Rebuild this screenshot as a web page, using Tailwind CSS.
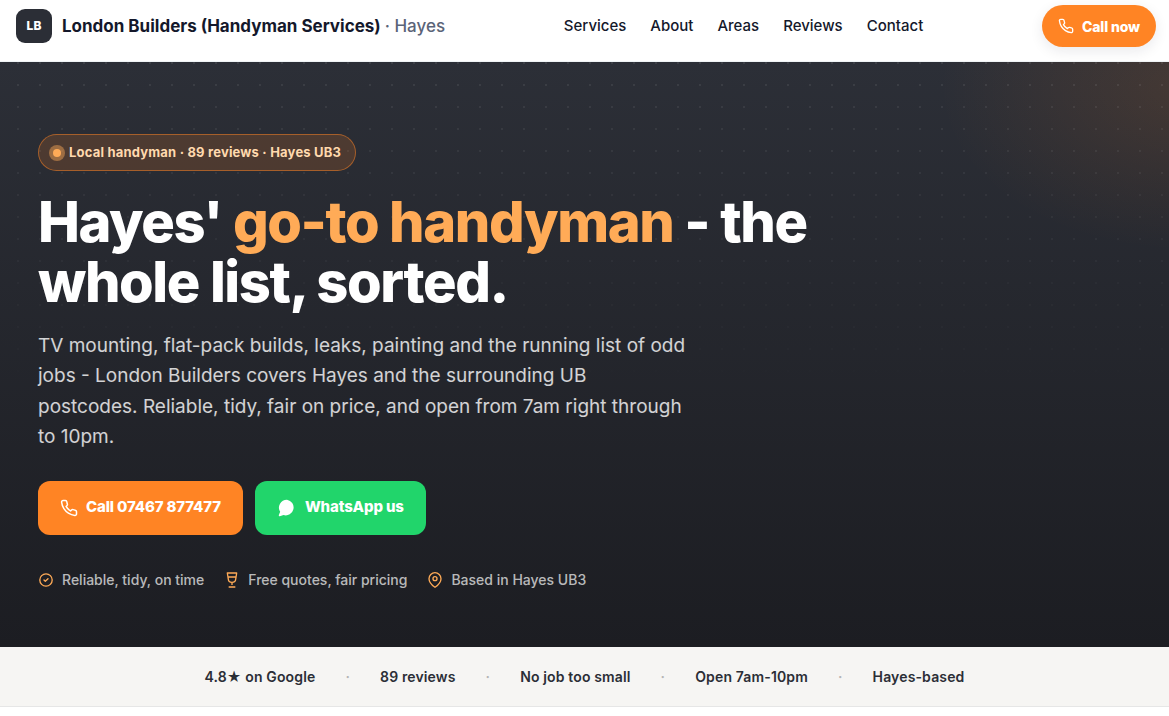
<!DOCTYPE html>
<html lang="en-GB">
<head>
    <meta charset="UTF-8">
    <meta name="viewport" content="width=device-width, initial-scale=1.0">
    <title>London Builders (Handyman Services) · Hayes</title>
    <script src="https://cdn.jsdelivr.net/npm/@tailwindcss/browser@4"></script>
</head>
<body class="bg-white font-[Inter,sans-serif] text-[#14182b] antialiased">

    <header class="flex items-center justify-between border-b border-[#f0f4f6] bg-white pt-[5px] pr-[13px] pb-[14px] pl-4">
        <a href="#" class="flex items-center gap-[10px] text-[17px] leading-7 font-bold">
            <span class="flex h-[34px] w-9 items-center justify-center rounded-[9px] bg-[#2b2e36] text-[12px] font-extrabold text-white">LB</span>
            <span>London Builders (Handyman Services) <span class="font-medium text-[#5b6478]">· Hayes</span></span>
        </a>
        <nav class="flex gap-6 text-[15px] font-medium">
            <a href="#services">Services</a>
            <a href="#about">About</a>
            <a href="#areas">Areas</a>
            <a href="#reviews">Reviews</a>
            <a href="#contact">Contact</a>
        </nav>
        <a href="tel:07467877477" class="flex h-[42px] items-center gap-2 rounded-full bg-[#ff8424] px-4 text-[14px] leading-[21px] font-extrabold tracking-[-0.01em] text-white shadow-[0_4px_14px_rgba(20,24,43,0.09)]">
            <svg class="size-4" viewBox="0 0 24 24" fill="none" stroke="currentColor" stroke-width="2" stroke-linecap="round" stroke-linejoin="round"><path d="M22 16.92v3a2 2 0 0 1-2.18 2 19.8 19.8 0 0 1-8.63-3.07 19.5 19.5 0 0 1-6-6A19.8 19.8 0 0 1 2.12 4.18 2 2 0 0 1 4.11 2h3a2 2 0 0 1 2 1.72c.13.96.36 1.9.7 2.81a2 2 0 0 1-.45 2.11L8.09 9.91a16 16 0 0 0 6 6l1.27-1.27a2 2 0 0 1 2.11-.45c.91.34 1.85.57 2.81.7A2 2 0 0 1 22 16.92z"/></svg>
            Call now
        </a>
    </header>

    <section class="relative overflow-hidden bg-linear-to-b from-[#2c2f37] to-[#1c1d22]">
        <!-- glow + dotted texture -->
        <div class="absolute inset-0 bg-[radial-gradient(250px_165px_at_calc(100%+20px)_24px,rgba(255,132,36,0.12),transparent)]"></div>
        <div class="absolute inset-0 bg-[radial-gradient(rgba(255,255,255,0.08)_1px,transparent_1px)] mask-[linear-gradient(to_bottom,black,transparent_60%)] bg-[size:22px_22px] bg-[position:7px_-10px]"></div>

        <div class="relative mx-auto max-w-[1141px] px-6 pt-[72px] pb-14">
            <p class="inline-flex h-[37px] items-center gap-2 rounded-full border border-[#ff8424]/50 bg-[#ff8424]/17 px-[14px] text-[13px] font-bold tracking-[0.015em] text-[#ffd9ae]">
                <span class="size-2 rounded-full bg-[#ffab57] ring-4 ring-[#ffab57]/45"></span>
                Local handyman · 89 reviews · Hayes UB3
            </p>
            <h1 class="mt-[21px] max-w-[820px] text-[56px] leading-[60px] font-extrabold tracking-tight text-white">Hayes' <span class="text-[#ffab57]">go-to handyman</span> - the whole list, sorted.</h1>
            <p class="mt-[19px] max-w-[650px] text-[19px] leading-[1.6] text-white/80">TV mounting, flat-pack builds, leaks, painting and the running list of odd jobs - London Builders covers Hayes and the surrounding UB postcodes. Reliable, tidy, fair on price, and open from 7am right through to 10pm.</p>

            <div class="mt-7 flex flex-wrap gap-3 text-[15px] font-extrabold tracking-[-0.01em] text-white">
                <a href="tel:07467877477" class="flex h-[54px] items-center gap-2 rounded-xl bg-[#ff8424] px-[22px]">
                    <svg class="size-[18px]" viewBox="0 0 24 24" fill="none" stroke="currentColor" stroke-width="2" stroke-linecap="round" stroke-linejoin="round"><path d="M22 16.92v3a2 2 0 0 1-2.18 2 19.8 19.8 0 0 1-8.63-3.07 19.5 19.5 0 0 1-6-6A19.8 19.8 0 0 1 2.12 4.18 2 2 0 0 1 4.11 2h3a2 2 0 0 1 2 1.72c.13.96.36 1.9.7 2.81a2 2 0 0 1-.45 2.11L8.09 9.91a16 16 0 0 0 6 6l1.27-1.27a2 2 0 0 1 2.11-.45c.91.34 1.85.57 2.81.7A2 2 0 0 1 22 16.92z"/></svg>
                    Call 07467 877477
                </a>
                <a href="https://wa.me/447467877477" class="flex h-[54px] items-center gap-2 rounded-xl bg-[#21d56b] px-[22px]">
                    <svg class="size-5" viewBox="0 0 24 24" fill="currentColor"><path d="M12 2a9.500 9.500 0 0 0-8.200 14.500L2.200 20.500a1 1 0 0 0 1.200 1.300l4.400-1.300A9.500 9.500 0 1 0 12 2z"/></svg>
                    WhatsApp us
                </a>
            </div>

            <ul class="mt-[34px] flex flex-wrap gap-x-5 gap-y-2 text-[14px] leading-[22px] font-medium text-white/70">
                <li class="flex items-center gap-2">
                    <svg class="size-4 text-[#ffab57]" viewBox="0 0 24 24" fill="none" stroke="currentColor" stroke-width="2" stroke-linecap="round" stroke-linejoin="round"><circle cx="12" cy="12" r="9.300"/><path d="m9 12 2 2 4-4"/></svg>
                    Reliable, tidy, on time
                </li>
                <li class="flex items-center gap-2">
                    <svg class="size-4 text-[#ffab57]" viewBox="0 0 24 24" fill="none" stroke="currentColor" stroke-width="2" stroke-linejoin="round"><path d="M5 1.500h14l-1.500 9.500a5.500 4.500 0 0 1-11 0zM5.500 7.500h13M12 15.500v4M7 22.500h10"/></svg>
                    Free quotes, fair pricing
                </li>
                <li class="flex items-center gap-2">
                    <svg class="size-4 overflow-visible text-[#ffab57]" viewBox="0 0 24 24" fill="none" stroke="currentColor" stroke-width="2" stroke-linecap="round" stroke-linejoin="round"><path d="M21 10c0 6.500-9 13-9 13s-9-6.500-9-13a9 9 0 0 1 18 0z"/><circle cx="12" cy="10" r="3"/></svg>
                    Based in Hayes UB3
                </li>
            </ul>
        </div>
    </section>

    <section class="border-b border-[#e6e6e6] bg-[#f6f5f3] py-[19px]">
        <div class="flex flex-wrap items-center justify-center gap-x-[30px] text-[14px] leading-[21px] font-semibold tracking-[0.01em] text-[#2b2e36]">
            <span>4.8★ on Google</span>
            <span class="text-[#b4b4b4]">·</span>
            <span>89 reviews</span>
            <span class="text-[#b4b4b4]">·</span>
            <span>No job too small</span>
            <span class="text-[#b4b4b4]">·</span>
            <span>Open 7am-10pm</span>
            <span class="text-[#b4b4b4]">·</span>
            <span>Hayes-based</span>
        </div>
    </section>

</body>
</html>
